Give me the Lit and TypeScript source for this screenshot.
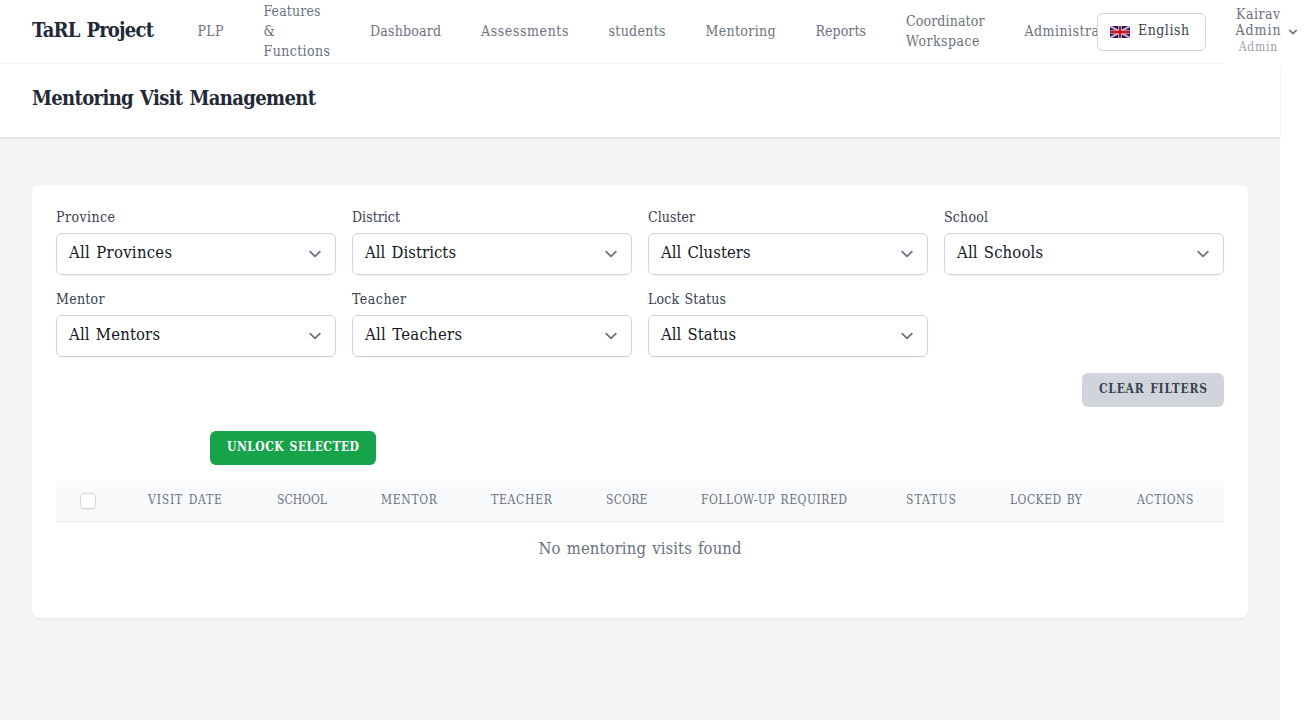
import { LitElement, html, css, svg } from "lit";
import { customElement, property } from "lit/decorators.js";

/** A single line of text tracked out (or in) to fill a given measure. */
@customElement("fit-text")
class FitText extends LitElement {
  @property() text = "";
  @property({ type: Number }) measure = 0;

  static styles = css`
    :host { display: block; white-space: nowrap; flex: none; }
    .run { display: inline-block; vertical-align: top; }
  `;

  updated() {
    const run = this.renderRoot.querySelector(".run") as HTMLElement;
    run.style.letterSpacing = "0px";
    const natural = run.getBoundingClientRect().width;
    const step = (this.measure - natural) / Math.max(1, this.text.length - 1);
    run.style.letterSpacing = `${step.toFixed(3)}px`;
    this.style.width = `${this.measure}px`;
  }

  render() {
    return html`<span class="run">${this.text}</span>`;
  }
}

const fit = (text: string, measure: number) =>
  html`<fit-text .text=${text} .measure=${measure}></fit-text>`;

const NAV: [string, number][][] = [
  [["PLP", 26]],
  [["Features", 57], ["&", 9], ["Functions", 66.5]],
  [["Dashboard", 71]],
  [["Assessments", 87.5]],
  [["students", 57]],
  [["Mentoring", 70]],
  [["Reports", 50.5]],
  [["Coordinator", 78.5], ["Workspace", 73.5]],
  [["Administration", 101]],
];

const FILTERS: [string, number, string, number][] = [
  ["Province", 59, "All Provinces", 103],
  ["District", 48, "All Districts", 91],
  ["Cluster", 47, "All Clusters", 89.5],
  ["School", 44, "All Schools", 86],
  ["Mentor", 48.5, "All Mentors", 91],
  ["Teacher", 54, "All Teachers", 97],
  ["Lock Status", 78, "All Status", 75],
];

const COLUMNS: [string, number][] = [
  ["VISIT DATE", 74], ["SCHOOL", 50], ["MENTOR", 56], ["TEACHER", 61],
  ["SCORE", 41.5], ["FOLLOW-UP REQUIRED", 146], ["STATUS", 50],
  ["LOCKED BY", 72], ["ACTIONS", 56.5],
];

const flag = svg`
  <rect width="60" height="36" fill="#012169"/>
  <path d="M0 0L60 36M60 0L0 36" stroke="#f3c9d3" stroke-width="6.5"/>
  <path d="M0 0L60 36M60 0L0 36" stroke="#d8647c" stroke-width="2.4"/>
  <path d="M30 0V36M0 18H60" stroke="#f3c9d3" stroke-width="11"/>
  <path d="M30 0V36M0 18H60" stroke="#c8102e" stroke-width="7"/>`;

@customElement("app-root")
class AppRoot extends LitElement {
  static styles = css`
    :host {
      display: block; width: 1314px; height: 720px; overflow: hidden; background: #fff;
      font-family: "DejaVu Serif Condensed", "DejaVu Serif", serif; font-stretch: condensed;
      word-spacing: 0.08em; color: #111827;
    }
    * { box-sizing: border-box; }
    .page { width: 1280px; height: 720px; background: #f3f4f6; }
    .nav {
      display: flex; width: 1314px; height: 64px; padding-left: 32px; position: relative;
      color: #6b7280; font-size: 14px; line-height: 20px;
      background: linear-gradient(#f7f8f9, #f7f8f9) 0 100% / 1280px 1px no-repeat #fff;
    }
    .brand { font-size: 20px; font-weight: 700; line-height: 28px; color: #1f2937; padding-top: 16px; width: 165.5px; flex: none; }
    .links { display: flex; align-items: center; gap: 40px; height: 62px; flex: none; }
    .language {
      display: flex; flex: none; gap: 8.5px; width: 109px; height: 38px; margin: 13px 0 0 -29px; padding: 6px 12px;
      background: #fff; border: 1px solid #d1d5db; border-radius: 6px; color: #374151;
      position: relative; z-index: 1;
    }
    .flag { width: 20px; height: 12px; margin-top: 6px; flex: none; display: block; }
    .user {
      display: flex; flex: none; width: 86px; height: 66px; margin-left: 18px; padding: 6px 0 0 12px;
      background: #fff; line-height: 16px; position: relative; z-index: 1;
    }
    .names { display: flex; flex-direction: column; align-items: center; width: 45px; }
    .role { font-size: 12px; color: #9ca3af; padding-top: 1px; }
    .user-arrow { width: 16px; height: 16px; margin: 18px 0 0 4px; display: block; }
    .header {
      height: 73px; background: #fff; padding: 20px 32px; font-size: 20px; line-height: 28px;
      font-weight: 700; color: #1f2937; box-shadow: 0 1px 3px rgba(0,0,0,.1), 0 1px 2px -1px rgba(0,0,0,.1);
    }
    .card {
      margin: 48px 32px 0; height: 433px; padding: 24px; background: #fff; border-radius: 8px;
      box-shadow: 0 1px 2px rgba(0,0,0,.05);
    }
    .filters { display: grid; grid-template-columns: repeat(4, 280px); gap: 16px; }
    .label { height: 24px; margin-top: -2px; margin-bottom: 2px; font-size: 14px; line-height: 20px; color: #374151; }
    .select {
      display: flex; justify-content: space-between; height: 42px; padding: 7px 8px 0 12px;
      border: 1px solid #d1d5db; border-radius: 6px; box-shadow: 0 1px 2px rgba(0,0,0,.05);
      font-size: 16.5px; line-height: 24px;
    }
    .select-arrow { width: 24px; height: 24px; margin-top: 1px; display: block; }
    .button {
      display: flex; height: 34px; padding: 8px 17px; border-radius: 6px; font-weight: 700;
      font-size: 12px; line-height: 17px;
    }
    .clear { width: 142px; margin: 16px 0 0 auto; background: #d1d5db; color: #374151; }
    .unlock { width: 166px; margin: 24px 0 16px 154px; background: #16a34a; color: #fff; }
    .head {
      display: grid; grid-template-columns: 92px 129px 104px 110px 115px 95px 205px 104px 127px 87px;
      height: 41px; padding-top: 11px; background: #f9fafb; border-bottom: 1px solid #e5e7eb;
      font-size: 12px; line-height: 16px; color: #6b7280;
    }
    .check {
      width: 16px; height: 16px; margin: 1px 0 0 24px; background: #fff; border: 1px solid #d1d5db;
      border-radius: 4px; box-shadow: 0 1px 2px rgba(0,0,0,.05);
    }
    .empty { display: flex; justify-content: center; padding-top: 15px; font-size: 16.5px; line-height: 24px; color: #6b7280; }
  `;

  render() {
    return html`
      <div class="page">
        <nav class="nav">
          <div class="brand">${fit("TaRL Project", 122)}</div>
          <div class="links">
            ${NAV.map((lines) => html`<div>${lines.map(([t, w]) => fit(t, w))}</div>`)}
          </div>
          <div class="language">
            <svg class="flag" viewBox="0 0 60 36">${flag}</svg>
            ${fit("English", 51)}
          </div>
          <div class="user">
            <div class="names">
              ${fit("Kairav", 44)}${fit("Admin", 45)}
              <div class="role">${fit("Admin", 38.5)}</div>
            </div>
            <svg class="user-arrow" viewBox="0 0 20 20" fill="#6b7280">
              <path fill-rule="evenodd" d="M5.293 7.293a1 1 0 011.414 0L10 10.586l3.293-3.293a1 1 0 111.414 1.414l-4 4a1 1 0 01-1.414 0l-4-4a1 1 0 010-1.414z"/>
            </svg>
          </div>
        </nav>
        <header class="header">${fit("Mentoring Visit Management", 284)}</header>
        <main class="card">
          <div class="filters">
            ${FILTERS.map(([label, lw, value, vw]) => html`
              <div>
                <div class="label">${fit(label, lw)}</div>
                <div class="select">
                  ${fit(value, vw)}
                  <svg class="select-arrow" viewBox="0 0 20 20" fill="none" stroke="#6b7280" stroke-width="1.5" stroke-linecap="round" stroke-linejoin="round">
                    <path d="M6 8l4 4 4-4"/>
                  </svg>
                </div>
              </div>`)}
          </div>
          <div class="button clear">${fit("CLEAR FILTERS", 108)}</div>
          <div class="button unlock">${fit("UNLOCK SELECTED", 132)}</div>
          <div class="head">
            <div class="check"></div>
            ${COLUMNS.map(([t, w]) => fit(t, w))}
          </div>
          <div class="empty">${fit("No mentoring visits found", 203)}</div>
        </main>
      </div>`;
  }
}
